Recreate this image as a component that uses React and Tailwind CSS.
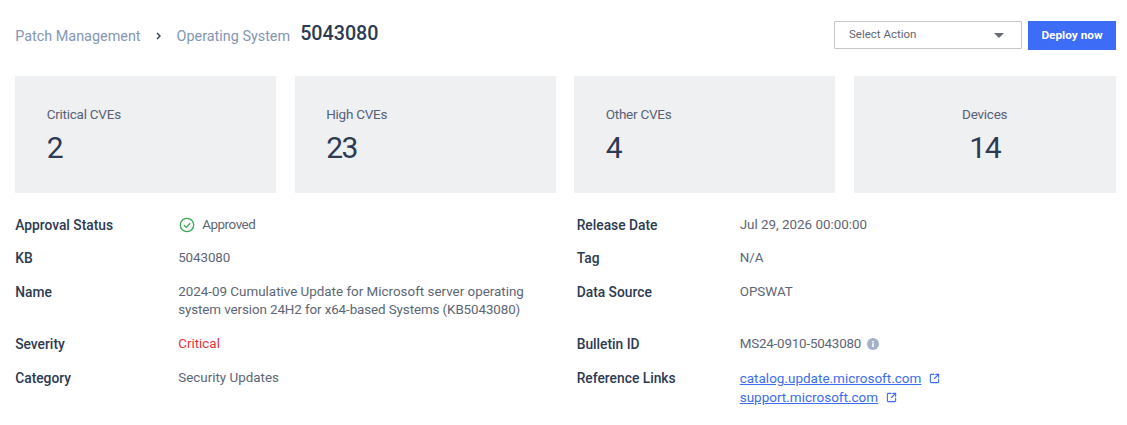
import { SquareArrowOutUpRight } from "lucide-react";

const cards = [
  { label: "Critical CVEs", value: "2" },
  { label: "High CVEs", value: "23" },
  { label: "Other CVEs", value: "4" },
  { label: "Devices", value: "14", center: true },
];

const Label = ({ children }) => (
  <div className="text-[13.8px] font-medium text-[#2c3a52]">{children}</div>
);

const Value = ({ children, className = "text-[#5d6675]" }) => (
  <div className={className}>{children}</div>
);

const DocLink = ({ children }) => (
  <div className="flex items-center gap-[8px] text-[13.5px] leading-[19px]">
    <a href="#" className="text-[#3d6cf0] underline">{children}</a>
    <SquareArrowOutUpRight className="w-[11px] h-[11px] text-[#3d6cf0]" strokeWidth={2.4} />
  </div>
);

const App = () => {
  return (
    <div className="w-[1127px] h-[425px] bg-white pl-[15.2px] pr-[11px] pt-[21px] font-['Roboto',sans-serif] overflow-hidden">

      {/* Header */}
      <div className="flex justify-between items-center h-[29px]">
        <div className="flex items-center">
          <span className="text-[14.4px] text-[#8496b4] mt-[2px]">Patch Management</span>
          <svg viewBox="0 0 8 8" className="w-[8px] h-[8px] ml-[14px] mr-[14px] mt-[2px]" fill="none" stroke="#2c3a52" strokeWidth="1.4">
            <path d="M2 1l3 3-3 3" />
          </svg>
          <span className="text-[14.4px] text-[#8496b4] mt-[2px]">Operating System</span>
          <span className="text-[19.7px] font-medium text-[#2c3a52] ml-[10px] -mt-[3px]">5043080</span>
        </div>
        <div className="flex gap-[6px]">
          <div className="w-[188px] h-[28px] border border-[#c4c6c9] rounded-[1px] flex items-center justify-between pl-[14px] pr-[17px] text-[11.5px] text-[#5f6673]">
            <span className="-mt-[1px]">Select Action</span>
            <span className="w-0 h-0 border-x-[5px] border-x-transparent border-t-[5px] border-t-[#666b75]" />
          </div>
          <button className="w-[88px] h-[29px] bg-[#3d6cf7] text-white text-[11.8px] font-bold">Deploy now</button>
        </div>
      </div>

      {/* Stat cards */}
      <div className="grid grid-cols-[261.25px_261.25px_261.25px_262px] gap-[18.25px] mt-[26px]">
        {cards.map((card) => (
          <div
            key={card.label}
            className={`h-[117px] bg-[#eff0f2] pt-[29px] px-[31.5px] ${card.center ? "text-center" : ""}`}
          >
            <div className="text-[13.5px] leading-[18px] tracking-[-0.25px] text-[#566176]">{card.label}</div>
            <div className="text-[30px] leading-[36px] mt-[7px] tracking-[-1.5px] text-[#2c3a52]">{card.value}</div>
          </div>
        ))}
      </div>

      {/* Details */}
      <div className="grid grid-cols-[163px_398.5px_163px_1fr] text-[13.4px] leading-[18px] mt-[23px]">
        <div className="h-[33px]"><Label>Approval Status</Label></div>
        <div className="flex items-start gap-[8px] text-[#5d6675]">
          <svg viewBox="0 0 16 16" className="w-[16px] h-[16px] mt-[1px] ml-[1px]" fill="none" stroke="#3aa655" strokeWidth="1.3">
            <circle cx="8" cy="8" r="6.7" />
            <path d="M5 8.2l2.2 2.2 4-4.2" />
          </svg>
          <span className="tracking-[-0.45px] -ml-[1px]">Approved</span>
        </div>
        <div><Label>Release Date</Label></div>
        <Value>Jul 29, 2026 00:00:00</Value>

        <div className="h-[34px]"><Label>KB</Label></div>
        <Value className="text-[#5d6675] tracking-[-0.1px]">5043080</Value>
        <div><Label>Tag</Label></div>
        <Value>N/A</Value>

        <div className="h-[52px]"><Label>Name</Label></div>
        <Value className="text-[#5d6675] w-[370px]">
          2024-09 Cumulative Update for Microsoft server operating
          <br />
          <span className="tracking-[-0.1px]">system version 24H2 for x64-based Systems (KB5043080)</span>
        </Value>
        <div><Label>Data Source</Label></div>
        <Value>OPSWAT</Value>

        <div className="h-[34px]"><Label>Severity</Label></div>
        <Value className="text-[#e0343a]">Critical</Value>
        <div><Label>Bulletin ID</Label></div>
        <div className="flex items-center gap-[6px] h-[18px] text-[#5d6675]">
          <span className="tracking-[-0.2px]">MS24-0910-5043080</span>
          <svg viewBox="0 0 12 12" className="w-[12px] h-[12px]">
            <circle cx="6" cy="6" r="6" fill="#a3b2c9" />
            <rect x="5.2" y="5.2" width="1.6" height="3.8" fill="#fff" />
            <rect x="5.2" y="3" width="1.6" height="1.5" fill="#fff" />
          </svg>
        </div>

        <div><Label>Category</Label></div>
        <Value>Security Updates</Value>
        <div><Label>Reference Links</Label></div>
        <div>
          <DocLink>catalog.update.microsoft.com</DocLink>
          <DocLink>support.microsoft.com</DocLink>
        </div>
      </div>

    </div>
  );
};

export default App;
